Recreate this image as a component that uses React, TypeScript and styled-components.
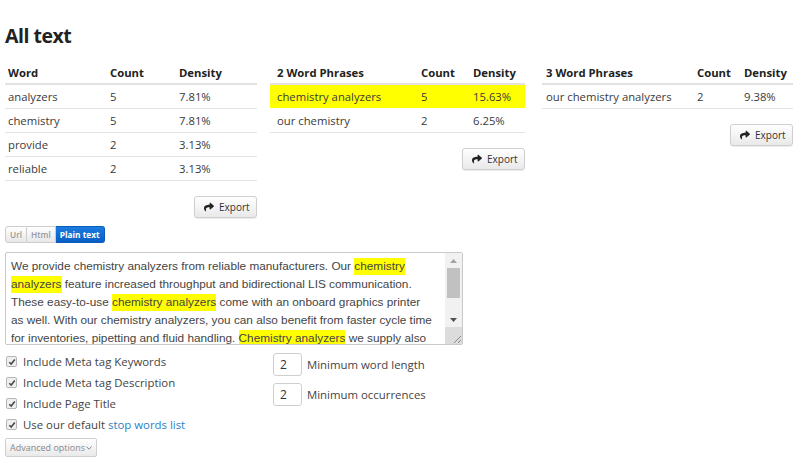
import React from "react";
import styled, { createGlobalStyle } from "styled-components";
import { FaShare } from "react-icons/fa";

const GlobalStyle = createGlobalStyle`
  html, body {
    margin: 0;
    padding: 0;
    background: #ffffff;
  }
  body {
    font-family: "Open Sans", "Noto Sans", sans-serif;
    color: #333;
  }
`;

type Row = { label: string; count: number; density: string; marked?: boolean };

type TableSpec = {
  title: string;
  width: number;
  gap: number;
  cols: [number, number];
  rows: Row[];
  lead: number;
};

const tables: TableSpec[] = [
  {
    title: "Word",
    width: 252,
    gap: 13,
    cols: [102, 69],
    lead: 3,
    rows: [
      { label: "analyzers", count: 5, density: "7.81%" },
      { label: "chemistry", count: 5, density: "7.81%" },
      { label: "provide", count: 2, density: "3.13%" },
      { label: "reliable", count: 2, density: "3.13%" },
    ],
  },
  {
    title: "2 Word Phrases",
    width: 255,
    gap: 17,
    cols: [144, 52],
    lead: 7,
    rows: [
      { label: "chemistry analyzers", count: 5, density: "15.63%", marked: true },
      { label: "our chemistry", count: 2, density: "6.25%" },
    ],
  },
  {
    title: "3 Word Phrases",
    width: 251,
    gap: 0,
    cols: [151, 47],
    lead: 4,
    rows: [{ label: "our chemistry analyzers", count: 2, density: "9.38%" }],
  },
];

const App: React.FC = () => {
  return (
    <Page>
      <GlobalStyle />
      <Title>All text</Title>
      <TablesRow>
        {tables.map((t) => (
          <TableBlock key={t.title} $width={t.width} $gap={t.gap}>
            <Table>
              <thead>
                <tr>
                  <Th $w={t.cols[0]} $lead={t.lead}>{t.title}</Th>
                  <Th $w={t.cols[1]}>Count</Th>
                  <Th>Density</Th>
                </tr>
              </thead>
              <tbody>
                {t.rows.map((r) => (
                  <tr key={r.label}>
                    <Td $lead={t.lead} $marked={r.marked}>{r.label}</Td>
                    <Td $marked={r.marked}>{r.count}</Td>
                    <Td $marked={r.marked}>{r.density}</Td>
                  </tr>
                ))}
              </tbody>
            </Table>
            <ExportRow>
              <ExportButton>
                <FaShare size={10} />
                <span>Export</span>
              </ExportButton>
            </ExportRow>
          </TableBlock>
        ))}
      </TablesRow>

      <Tabs>
        <Tab>Url</Tab>
        <Tab>Html</Tab>
        <Tab $active>Plain text</Tab>
      </Tabs>

      <TextBox>
        <TextContent>
          We provide chemistry analyzers from reliable manufacturers. Our <Mark>chemistry</Mark>{" "}
          <Mark>analyzers</Mark> feature increased throughput and bidirectional LIS communication.
          These easy-to-use <Mark>chemistry analyzers</Mark> come with an onboard graphics printer as
          well. With our chemistry analyzers, you can also benefit from faster cycle time for
          inventories, pipetting and fluid handling. <Mark>Chemistry analyzers</Mark> we supply also
          offer a large sample capacity.
        </TextContent>
        <ScrollBar>
          <ScrollArrow>
            <svg width="7" height="4" viewBox="0 0 7 4">
              <path d="M0 4 L3.5 0 L7 4 Z" fill="#a3a3a3" />
            </svg>
          </ScrollArrow>
          <ScrollTrack>
            <ScrollThumb />
          </ScrollTrack>
          <ScrollArrow>
            <svg width="7" height="4" viewBox="0 0 7 4">
              <path d="M0 0 L3.5 4 L7 0 Z" fill="#505050" />
            </svg>
          </ScrollArrow>
          <Grip>
            <svg width="10" height="10" viewBox="0 0 10 10">
              <path d="M9 2 L2 9 M9 6 L6 9" stroke="#8a8a8a" strokeWidth="1" />
            </svg>
          </Grip>
        </ScrollBar>
      </TextBox>

      <Options>
        <CheckList>
          {[
            "Include Meta tag Keywords",
            "Include Meta tag Description",
            "Include Page Title",
          ].map((l) => (
            <CheckLine key={l}>
              <CheckMark />
              {l}
            </CheckLine>
          ))}
          <CheckLine>
            <CheckMark />
            Use our default&nbsp;<Link>stop words list</Link>
          </CheckLine>
          <AdvancedButton>
            Advanced options
            <svg width="6" height="4" viewBox="0 0 6 4">
              <path d="M0.5 0.5 L3 3.3 L5.5 0.5" stroke="#8a8a8a" strokeWidth="1" fill="none" />
            </svg>
          </AdvancedButton>
        </CheckList>
        <NumberList>
          <NumberLine>
            <NumberBox>2</NumberBox>
            Minimum word length
          </NumberLine>
          <NumberLine>
            <NumberBox>2</NumberBox>
            Minimum occurrences
          </NumberLine>
        </NumberList>
      </Options>
    </Page>
  );
};

const CheckMark: React.FC = () => (
  <Check>
    <svg width="8" height="8" viewBox="0 0 8 8">
      <path d="M1.3 4.2 L3.2 6.1 L6.8 1.6" stroke="#4a4a4a" strokeWidth="1.6" fill="none" />
    </svg>
  </Check>
);

const Page = styled.div`
  width: 800px;
  height: 464px;
  box-sizing: border-box;
  padding: 23px 5px 0 5px;
  overflow: hidden;
`;

const Title = styled.h1`
  margin: 0 0 12px 0;
  font-size: 19.5px;
  line-height: 26px;
  font-weight: 700;
  color: #222;
  letter-spacing: -0.5px;
`;

const TablesRow = styled.div`
  display: flex;
  align-items: flex-start;
`;

const TableBlock = styled.div<{ $width: number; $gap: number }>`
  width: ${(p) => p.$width}px;
  margin-right: ${(p) => p.$gap}px;
  display: flex;
  flex-direction: column;
`;

const Table = styled.table`
  width: 100%;
  border-collapse: collapse;
  font-size: 11.3px;
`;

const Th = styled.th<{ $w?: number; $lead?: number }>`
  width: ${(p) => (p.$w ? `${p.$w}px` : "auto")};
  text-align: left;
  font-weight: 700;
  color: #222;
  height: 22px;
  padding: 0 0 0 ${(p) => p.$lead ?? 0}px;
  border-bottom: 2px solid #e2e2e2;
  vertical-align: middle;
`;

const Td = styled.td<{ $lead?: number; $marked?: boolean }>`
  height: 23px;
  padding: 0 0 0 ${(p) => p.$lead ?? 0}px;
  border-bottom: 1px solid #e2e2e2;
  color: #3a3a3a;
  vertical-align: middle;
  background: ${(p) => (p.$marked ? "#ffff00" : "transparent")};
  ${(p) => (p.$marked ? "border-bottom-color: #fff;" : "")}
`;

const ExportRow = styled.div`
  display: flex;
  justify-content: flex-end;
  margin-top: 15px;
`;

const ExportButton = styled.button`
  display: flex;
  align-items: center;
  gap: 5px;
  height: 22px;
  width: 63px;
  padding: 0 0 0 9px;
  font-family: "Open Sans", sans-serif;
  font-size: 10px;
  color: #333;
  border: 1px solid #cfcfcf;
  border-radius: 3px;
  background: linear-gradient(#ffffff, #e9e9e9);
  box-shadow: 0 1px 1px rgba(0, 0, 0, 0.08);
  cursor: pointer;
  svg {
    color: #222;
  }
`;

const Tabs = styled.div`
  display: flex;
  margin-top: 8px;
`;

const Tab = styled.div<{ $active?: boolean }>`
  height: 17px;
  line-height: 16px;
  box-sizing: border-box;
  padding: 0 4px;
  font-size: 8.3px;
  font-weight: ${(p) => (p.$active ? 700 : 600)};
  color: ${(p) => (p.$active ? "#fff" : "#9a9a9a")};
  border: 1px solid ${(p) => (p.$active ? "#0b5dbd" : "#cdcdcd")};
  background: ${(p) =>
    p.$active ? "linear-gradient(#1b7ce0, #0a5ec4)" : "linear-gradient(#ffffff, #e8e8e8)"};
  & + & {
    border-left: none;
  }
  &:first-child {
    border-radius: 3px 0 0 3px;
  }
  &:last-child {
    border-radius: 0 3px 3px 0;
  }
`;

const TextBox = styled.div`
  display: flex;
  margin-top: 9px;
  width: 458px;
  height: 93px;
  box-sizing: border-box;
  border: 1px solid #c9c9c9;
  border-radius: 2px;
`;

const TextContent = styled.div`
  flex: 1;
  overflow: hidden;
  padding: 4px 9.5px 0 5px;
  font-family: "Liberation Sans", Arial, sans-serif;
  font-size: 11.8px;
  line-height: 18px;
  color: #444;
`;

const Mark = styled.span`
  background: #ffff00;
  box-shadow: 0 2px 0 #ffff00, 0 -1px 0 #ffff00;
`;

const ScrollBar = styled.div`
  width: 17px;
  display: flex;
  flex-direction: column;
  background: #f1f1f1;
`;

const ScrollArrow = styled.div`
  height: 15px;
  display: flex;
  align-items: center;
  justify-content: center;
`;

const ScrollTrack = styled.div`
  flex: 1;
  padding: 0 2px;
`;

const ScrollThumb = styled.div`
  height: 30px;
  background: #c1c1c1;
`;

const Grip = styled.div`
  height: 17px;
  display: flex;
  align-items: flex-end;
  justify-content: flex-end;
  background: #dcdcdc;
`;

const Options = styled.div`
  display: flex;
  margin-top: 6px;
`;

const CheckList = styled.div`
  width: 268px;
  display: flex;
  flex-direction: column;
`;

const CheckLine = styled.div`
  display: flex;
  align-items: center;
  height: 21px;
  font-size: 11.4px;
  color: #444;
`;

const Check = styled.span`
  width: 9px;
  height: 9px;
  margin: 0 6px 0 1px;
  border: 1px solid #b5b5b5;
  border-radius: 2px;
  background: #efefef;
  display: flex;
  align-items: center;
  justify-content: center;
`;

const Link = styled.span`
  color: #2a7fc8;
`;

const AdvancedButton = styled.div`
  align-self: flex-start;
  display: flex;
  align-items: center;
  gap: 1px;
  margin-top: 3px;
  height: 19px;
  box-sizing: border-box;
  padding: 0 4px;
  font-size: 9px;
  color: #8a8a8a;
  border: 1px solid #cfcfcf;
  border-radius: 2px;
  background: linear-gradient(#ffffff, #e9e9e9);
`;

const NumberList = styled.div`
  display: flex;
  flex-direction: column;
  gap: 7px;
  margin-top: 2px;
`;

const NumberLine = styled.div`
  display: flex;
  align-items: center;
  gap: 5px;
  font-size: 11.4px;
  color: #444;
`;

const NumberBox = styled.div`
  width: 29px;
  height: 23px;
  box-sizing: border-box;
  padding-left: 6px;
  line-height: 21px;
  font-size: 12px;
  color: #333;
  border: 1px solid #cfcfcf;
  border-radius: 3px;
`;

export default App;
